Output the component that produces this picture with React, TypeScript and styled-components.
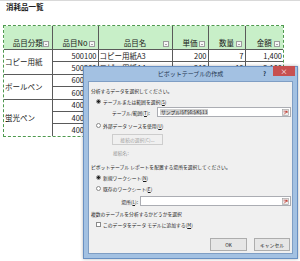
import styled, { createGlobalStyle } from "styled-components";

const GlobalStyle = createGlobalStyle`
  html, body {
    margin: 0;
    padding: 0;
    background: #fff;
  }
  body {
    font-family: "Noto Sans CJK JP", "Noto Sans", sans-serif;
  }
`;

const Page = styled.div`
  position: relative;
  width: 300px;
  height: 261px;
  overflow: hidden;
  box-sizing: border-box;
  border-top: 1px solid #d9d9d9;
  padding: 1px 0 0 3px;
`;

const SheetTitle = styled.div`
  font-size: 7.5px;
  font-weight: bold;
  line-height: 9px;
  padding-left: 3px;
  color: #222;
`;

const TableFrame = styled.div`
  margin-top: 14px;
  width: 279px;
  border: 1px dashed #4f9a4f;
`;

const Grid = styled.table`
  border-collapse: collapse;
  border-style: hidden;
  table-layout: fixed;
  width: 279px;
  font-size: 7.5px;
  color: #1a1a1a;
`;

const HeadCell = styled.th`
  position: relative;
  height: 21px;
  padding: 0 0 2px;
  background: #c8efc8;
  border: 1px solid #5a5a5a;
  font-weight: normal;
  line-height: 9px;
  vertical-align: bottom;
  text-align: center;
`;

const FilterButton = styled.span`
  position: absolute;
  right: 3px;
  bottom: 2px;
  width: 6px;
  height: 6px;
  box-sizing: border-box;
  background: #f6f6f6;
  border: 1px solid #9c9c9c;
  display: flex;
  align-items: center;
  justify-content: center;

  &::after {
    content: "";
    border-left: 1.5px solid transparent;
    border-right: 1.5px solid transparent;
    border-top: 1.5px solid #555;
  }
`;

const Cell = styled.td<{ $align?: "left" | "right" }>`
  height: 11.4px;
  padding: 0 1px;
  border: 1px solid #5a5a5a;
  line-height: 10px;
  text-align: ${(p) => p.$align ?? "right"};
  white-space: nowrap;
  overflow: hidden;
`;

const Dialog = styled.div`
  position: absolute;
  left: 83px;
  top: 65px;
  width: 215px;
  height: 193px;
  box-sizing: border-box;
  display: flex;
  flex-direction: column;
  background: #a3c1e2;
  border: 1px solid #6990c2;
  box-shadow: 0 0 3px rgba(0, 0, 0, 0.3);
`;

const TitleBar = styled.div`
  position: relative;
  height: 14px;
  display: flex;
  align-items: center;
  justify-content: center;
  font-size: 6px;
  line-height: 8px;
  color: #1f3550;
`;

const Help = styled.span`
  position: absolute;
  right: 31px;
  top: 3px;
  font-size: 6px;
  line-height: 7px;
  font-weight: bold;
  color: #1f3550;
`;

const Close = styled.span`
  position: absolute;
  right: 2px;
  top: -1px;
  width: 22px;
  height: 10px;
  background: #c75050;
  color: #fff;
  font-size: 7px;
  line-height: 10px;
  text-align: center;
`;

const Body = styled.div`
  flex: 1;
  margin: 0 4px 4px;
  padding: 0 1px 0 2px;
  background: #f0f0f0;
  border: 1px solid #7f9ec4;
  display: flex;
  flex-direction: column;
  font-size: 4.8px;
  line-height: 7px;
  color: #1a1a1a;
`;

const Line = styled.div<{ $mt: number; $indent?: number; $h?: number }>`
  display: flex;
  align-items: center;
  gap: 2px;
  height: ${(p) => p.$h ?? 10}px;
  margin-top: ${(p) => p.$mt}px;
  padding-left: ${(p) => p.$indent ?? 0}px;
  white-space: nowrap;
`;

const Radio = styled.span<{ $on?: boolean }>`
  flex: none;
  width: 5px;
  height: 5px;
  box-sizing: border-box;
  border-radius: 50%;
  border: 1px solid #8a8a8a;
  background: ${(p) => (p.$on ? "radial-gradient(circle, #222 0 1.3px, #fff 1.6px)" : "#fff")};
`;

const Check = styled.span`
  flex: none;
  width: 5px;
  height: 5px;
  box-sizing: border-box;
  border: 1px solid #8a8a8a;
  background: #fff;
`;

const Label = styled.span<{ $w?: number; $right?: boolean; $muted?: boolean }>`
  flex: none;
  ${(p) => (p.$w ? `width: ${p.$w}px;` : "")}
  text-align: ${(p) => (p.$right ? "right" : "left")};
  color: ${(p) => (p.$muted ? "#9a9a9a" : "inherit")};
`;

const Field = styled.div`
  flex: 1;
  min-width: 0;
  height: 10px;
  box-sizing: border-box;
  display: flex;
  align-items: center;
  justify-content: space-between;
  padding: 0 1px 0 2px;
  background: #fff;
  border: 1px solid #abadb3;
`;

const Selected = styled.span`
  background: #cfcfcf;
  padding: 0 1px;
  line-height: 6px;
`;

const Button = styled.div<{ $w: number; $disabled?: boolean }>`
  width: ${(p) => p.$w}px;
  height: 100%;
  box-sizing: border-box;
  display: flex;
  align-items: center;
  justify-content: center;
  background: ${(p) => (p.$disabled ? "#f0f0f0" : "#e6e6e6")};
  border: 1px solid ${(p) => (p.$disabled ? "#cdcdcd" : "#adadad")};
  color: ${(p) => (p.$disabled ? "#a3a3a3" : "#1a1a1a")};
`;

const ButtonRow = styled(Line)`
  justify-content: flex-end;
  gap: 7px;
  padding-right: 1px;
`;

const Picker = () => (
  <svg width="7" height="7" viewBox="0 0 7 7">
    <rect x="0.5" y="0.5" width="6" height="6" fill="#eee" stroke="#999" strokeWidth="0.6" />
    <rect x="1.5" y="1.5" width="4" height="2" fill="#d6a0a0" />
    <path d="M2 5.5 L5 2.5 M3.5 2.5 H5 V4" stroke="#c0392b" strokeWidth="0.8" fill="none" />
  </svg>
);

// rows 3-7 sit under the dialog: only the item numbers peek out on the left
const rows = [
  { group: "コピー用紙", span: 2, no: "500100", name: "コピー用紙A3", price: "200", qty: "7", total: "1,400" },
  { no: "500200", name: "コピー用紙A4", price: "210", qty: "10", total: "2,100" },
  { group: "ボールペン", span: 2, no: "600100", name: "", price: "", qty: "", total: "" },
  { no: "600200", name: "", price: "", qty: "", total: "" },
  { group: "蛍光ペン", span: 3, no: "400100", name: "", price: "", qty: "", total: "" },
  { no: "400200", name: "", price: "", qty: "", total: "" },
  { no: "400300", name: "", price: "", qty: "", total: "" },
];

const heads = ["品目分類", "品目No", "品目名", "単価", "数量", "金額"];
const widths = [48, 46, 74, 36, 37, 38];

export default function App() {
  return (
    <>
      <GlobalStyle />
      <Page>
        <SheetTitle>消耗品一覧</SheetTitle>
        <TableFrame>
          <Grid>
            <colgroup>
              {widths.map((w, i) => (
                <col key={i} style={{ width: w }} />
              ))}
            </colgroup>
            <thead>
              <tr>
                {heads.map((h) => (
                  <HeadCell key={h}>
                    {h}
                    <FilterButton />
                  </HeadCell>
                ))}
              </tr>
            </thead>
            <tbody>
              {rows.map((r) => (
                <tr key={r.no}>
                  {r.group && (
                    <Cell $align="left" rowSpan={r.span}>
                      {r.group}
                    </Cell>
                  )}
                  <Cell>{r.no}</Cell>
                  <Cell $align="left">{r.name}</Cell>
                  <Cell>{r.price}</Cell>
                  <Cell>{r.qty}</Cell>
                  <Cell>{r.total}</Cell>
                </tr>
              ))}
            </tbody>
          </Grid>
        </TableFrame>

        <Dialog>
          <TitleBar>
            ピボットテーブルの作成
            <Help>?</Help>
            <Close>×</Close>
          </TitleBar>
          <Body>
            <Line $mt={3}>分析するデータを選択してください。</Line>
            <Line $mt={1} $indent={5}>
              <Radio $on />
              <span>
                テーブルまたは範囲を選択(<u>S</u>)
              </span>
            </Line>
            <Line $mt={1} $indent={21}>
              <Label $w={43}>
                テーブル/範囲(<u>T</u>):
              </Label>
              <Field>
                <Selected>サンプル!$F$6:$K$13</Selected>
                <Picker />
              </Field>
            </Line>
            <Line $mt={3} $indent={5}>
              <Radio />
              <span>
                外部データ ソースを使用(<u>U</u>)
              </span>
            </Line>
            <Line $mt={4} $indent={21} $h={11}>
              <Button $w={51} $disabled>
                接続の選択(C)...
              </Button>
            </Line>
            <Line $mt={2} $indent={22}>
              <Label $muted>接続名:</Label>
            </Line>
            <Line $mt={4}>ピボットテーブル レポートを配置する場所を選択してください。</Line>
            <Line $mt={1} $indent={5}>
              <Radio $on />
              <span>
                新規ワークシート(<u>N</u>)
              </span>
            </Line>
            <Line $mt={1} $indent={5}>
              <Radio />
              <span>
                既存のワークシート(<u>E</u>)
              </span>
            </Line>
            <Line $mt={3} $indent={21}>
              <Label $w={26} $right>
                場所(<u>L</u>):
              </Label>
              <Field>
                <span />
                <Picker />
              </Field>
            </Line>
            <Line $mt={2}>複数のテーブルを分析するかどうかを選択</Line>
            <Line $mt={1} $indent={5}>
              <Check />
              <span>
                このデータをデータ モデルに追加する(<u>M</u>)
              </span>
            </Line>
            <ButtonRow $mt={9} $h={13}>
              <Button $w={37}>OK</Button>
              <Button $w={36}>キャンセル</Button>
            </ButtonRow>
          </Body>
        </Dialog>
      </Page>
    </>
  );
}
